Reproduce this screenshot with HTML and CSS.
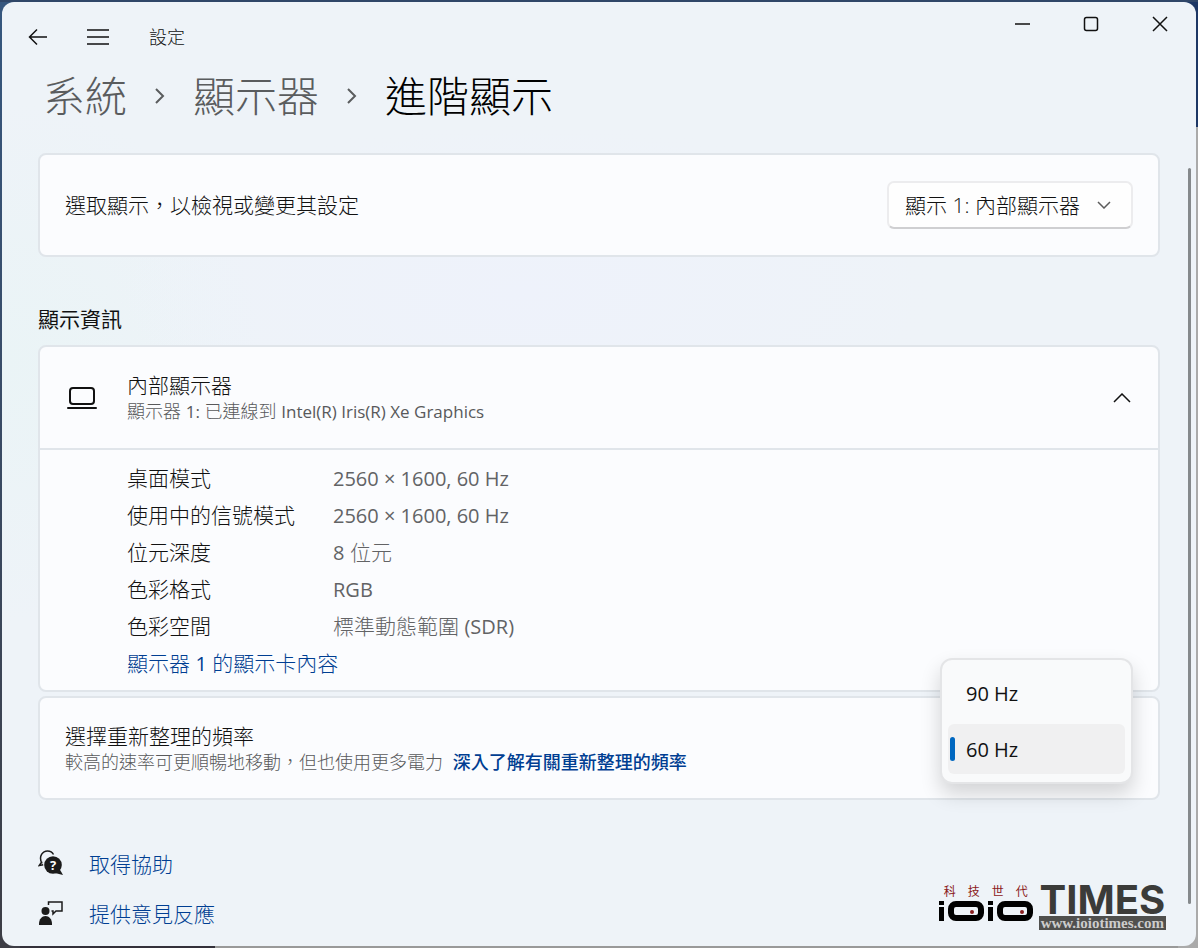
FILE: index.html
```html
<!DOCTYPE html>
<html lang="zh-Hant">
<head>
<meta charset="utf-8">
<title>設定</title>
<link rel="stylesheet" href="styles.css">
</head>
<body>
<div class="window">
  <header class="titlebar">
    <div class="nav">
      <button class="icon-btn" aria-label="返回"><svg width="20" height="18" viewBox="0 0 20 18"><path d="M19 9H2M9 1.500 1.500 9 9 16.500"/></svg></button>
      <button class="icon-btn" aria-label="功能表"><svg width="22" height="18" viewBox="0 0 22 18"><path d="M0 2h22M0 9h22M0 16h22"/></svg></button>
      <span class="app-name">設定</span>
    </div>
    <div class="controls">
      <button class="ctl" aria-label="最小化"><svg width="16" height="16" viewBox="0 0 16 16"><path d="M1 8h15"/></svg></button>
      <button class="ctl" aria-label="最大化"><svg width="16" height="16" viewBox="0 0 16 16"><rect x="1.500" y="1.500" width="13" height="13" rx="2"/></svg></button>
      <button class="ctl" aria-label="關閉"><svg width="16" height="16" viewBox="0 0 16 16"><path d="m1 1 14 14M15 1 1 15"/></svg></button>
    </div>
  </header>

  <main class="content">
    <nav class="crumbs" aria-label="路徑">
      <a href="#">系統</a>
      <svg width="10" height="18" viewBox="0 0 10 18"><path d="m1 2 7 7-7 7"/></svg>
      <a href="#">顯示器</a>
      <svg width="10" height="18" viewBox="0 0 10 18"><path d="m1 2 7 7-7 7"/></svg>
      <h1>進階顯示</h1>
    </nav>

    <section class="card row">
      <label class="title" for="display">選取顯示，以檢視或變更其設定</label>
      <div class="select-wrap">
        <select id="display"><option>顯示 1: 內部顯示器</option></select>
        <svg class="chevron" width="14" height="8" viewBox="0 0 14 8"><path d="m1 1 6 6 6-6"/></svg>
      </div>
    </section>

    <h2>顯示資訊</h2>

    <section class="card">
      <button class="expander" aria-expanded="true">
        <svg class="laptop" width="30" height="22" viewBox="0 0 30 22"><rect x="3" y="1" width="24" height="16" rx="3"/><path d="M1 21h28" stroke-linecap="round"/></svg>
        <span class="stack">
          <span class="title">內部顯示器</span>
          <span class="sub">顯示器 <span class="latin-sub">1:</span> 已連線到 <span class="latin-sub">Intel(R) Iris(R) Xe Graphics</span></span>
        </span>
        <svg class="collapse" width="18" height="10" viewBox="0 0 18 10"><path d="m1 9 8-8 8 8"/></svg>
      </button>
      <div class="details">
        <dl>
          <dt>桌面模式</dt><dd><span class="latin">2560 × 1600, 60 Hz</span></dd>
          <dt>使用中的信號模式</dt><dd><span class="latin">2560 × 1600, 60 Hz</span></dd>
          <dt>位元深度</dt><dd><span class="latin">8</span> 位元</dd>
          <dt>色彩格式</dt><dd><span class="latin">RGB</span></dd>
          <dt>色彩空間</dt><dd>標準動態範圍 <span class="latin">(SDR)</span></dd>
        </dl>
        <a class="link" href="#">顯示器 <span class="latin">1</span> 的顯示卡內容</a>
      </div>
    </section>

    <section class="card row rate">
      <div class="stack">
        <span class="title" id="rate-label">選擇重新整理的頻率</span>
        <span class="sub">較高的速率可更順暢地移動，但也使用更多電力 <a class="more" href="#">深入了解有關重新整理的頻率</a></span>
      </div>
      <div class="menu" role="listbox" aria-labelledby="rate-label">
        <button class="option" role="option" aria-selected="false">90 Hz</button>
        <button class="option selected" role="option" aria-selected="true">60 Hz</button>
      </div>
    </section>

    <footer class="help">
      <a class="help-link" href="#">
        <svg width="26" height="26" viewBox="0 0 26 26"><path class="thin" d="M4 13.500C0 6 5 1 9.500 1c3 0 5 1.500 6 3.500M4 11.500 1.200 15.500l4-.8"/><circle class="solid" cx="15" cy="15" r="8.800"/><path class="solid" d="m21 18 4 7-8-2z"/><text class="mark" x="15" y="20">?</text></svg>
        取得協助</a>
      <a class="help-link" href="#">
        <svg width="26" height="26" viewBox="0 0 26 26"><circle class="solid" cx="7.500" cy="11" r="4"/><path class="solid" d="M1 25v-1c0-5 3-8 6.500-8s6.500 3 6.500 8v1z"/><path class="thin" d="M10.500 5V2H24v9h-6l-3 3v-3h-1.500"/></svg>
        提供意見反應</a>
    </footer>
  </main>

  <div class="scroll-thumb"></div>
  <div class="watermark">
    <div class="brand">
      <div class="brand-cn"><span>科</span><span>技</span><span>世</span><span>代</span></div>
      <svg class="ioio" width="96" height="22" viewBox="0 0 96 22">
        <path class="ink" d="M1 1h5v4H1zM1 7h5v14H1zM50 1h5v4h-5zM50 7h5v14h-5z"/>
        <rect class="ring" x="13" y="4" width="30" height="14" rx="5"/>
        <rect class="ring" x="62" y="4" width="30" height="14" rx="5"/>
        <circle class="dot" cx="34" cy="12" r="2"/><circle class="dot" cx="84" cy="12" r="2"/>
      </svg>
    </div>
    <div class="times"><span class="times-name">TIMES</span><span class="times-url">www.ioiotimes.com</span></div>
  </div>
</div>
</body>
</html>
```
FILE: styles.css
```css
* { box-sizing: border-box; }

body {
  margin: 0;
  padding: 2px;
  min-height: 100vh;
  font-family: "Open Sans", "Noto Sans CJK TC", sans-serif;
  font-size: 21px;
  font-weight: 300;
  color: #111;
  background:
    linear-gradient(#2f4668, #2f4668) top / 100% 2px no-repeat,
    linear-gradient(#1d3765 127px, #aaa 127px) right / 20px 100% no-repeat,
    linear-gradient(#36577f, #3d3d45) left / 20px 100% no-repeat,
    linear-gradient(90deg, #33303a 215px, #999 215px);
}

button, select {
  font: inherit;
  color: inherit;
  border: 0;
  background: none;
  padding: 0;
}

a { text-decoration: none; }
svg { fill: none; stroke: currentColor; stroke-width: 2; flex: none; }

.latin { font-size: 20px; font-weight: 400; }
.latin-sub { font-size: 17px; font-weight: 400; }

.window {
  position: relative;
  min-height: calc(100vh - 4px);
  border-radius: 12px;
  background:
    radial-gradient(ellipse 420px 170px at 520px 290px, #eef2fb, transparent),
    radial-gradient(circle at 0 360px, #eaf4f6, transparent 260px),
    #eef3f8;
}

.titlebar { display: flex; justify-content: space-between; height: 70px; }
.nav { display: flex; align-items: center; padding-left: 6px; }
.icon-btn { width: 60px; height: 50px; display: grid; place-items: center; }
.icon-btn svg { stroke-width: 1.5; }
.app-name { font-size: 18px; line-height: 24px; padding-left: 21px; }
.controls { display: flex; padding-right: 2px; }
.ctl { width: 69px; height: 44px; display: grid; place-items: center; }
.ctl svg { stroke-width: 1.5; }

.content { padding: 0 36px; }

.crumbs {
  display: flex;
  align-items: center;
  gap: 28px;
  padding-left: 5px;
  margin-bottom: 33px;
  font-size: 42px;
  line-height: 48px;
  color: #5a5c5e;
}
.crumbs a { color: inherit; }
.crumbs h1 { margin: 0; font-size: 42px; font-weight: 300; color: #000; }

.card {
  border: 2px solid #e0e5ea;
  border-radius: 8px;
  background: #fbfcfe;
  margin-bottom: 4px;
}
.row {
  display: flex;
  align-items: center;
  justify-content: space-between;
  min-height: 104px;
  padding: 0 25px;
}
.stack { display: flex; flex-direction: column; text-align: left; }
.title { line-height: 28px; }
.sub { font-size: 18px; line-height: 24px; color: #58595b; }

.select-wrap { position: relative; }
.select-wrap select {
  appearance: none;
  width: 246px;
  height: 48px;
  padding: 0 16px;
  border: 2px solid #ececee;
  border-bottom-color: #cfcfd1;
  border-radius: 7px;
  background: #fefefe;
}
.chevron { position: absolute; right: 22px; top: 20px; color: #5c5c5c; stroke-width: 1.5; }

h2 { margin: 48px 0 12px; font-size: 21px; line-height: 28px; font-weight: 400; }

.expander {
  display: flex;
  align-items: center;
  width: 100%;
  height: 103px;
  padding: 0 27px;
  border-bottom: 2px solid #e0e5ea;
}
.expander .stack { flex: 1; padding-left: 30px; }
.collapse { stroke-width: 1.5; }
.details { padding: 10px 24px 8px 87px; line-height: 37px; }
dl { display: grid; grid-template-columns: 206px 1fr; grid-auto-rows: 37px; margin: 0; }
dd { margin: 0; color: #626365; }
.link { display: block; height: 37px; }
.link, .help-link { color: #003e92; }
.more { color: #003e92; font-weight: 500; padding-left: 5px; }

.rate { position: relative; }
.menu {
  position: absolute;
  right: 25px;
  top: -40px;
  width: 193px;
  padding: 8px 6px;
  border: 2px solid #e4e5e7;
  border-radius: 12px;
  background: #f9fafb;
  box-shadow: 0 10px 20px rgba(0, 0, 0, .16);
  display: grid;
  gap: 6px;
}
.option {
  position: relative;
  height: 50px;
  padding-left: 18px;
  border-radius: 6px;
  text-align: left;
  font-size: 20px;
  font-weight: 400;
}
.selected { background: #f0f0f1; }
.selected::before {
  content: "";
  position: absolute;
  left: 2px;
  top: 13px;
  width: 5px;
  height: 24px;
  border-radius: 3px;
  background: #0067c0;
}

.help { padding-top: 34px; }
.help-link { display: flex; align-items: center; gap: 25px; height: 50px; }
.help-link svg { color: #1b1b1b; }
.thin { stroke-width: 1.5; }
.solid { fill: currentColor; stroke: none; }
.mark { fill: #fff; stroke: none; font-size: 13px; font-weight: 700; text-anchor: middle; }

.scroll-thumb {
  position: absolute;
  right: 5px;
  top: 166px;
  bottom: 42px;
  width: 3px;
  border-radius: 2px;
  background: #85898c;
}

.watermark { position: absolute; right: 30px; bottom: 16px; display: flex; gap: 5px; }
.brand-cn { display: flex; justify-content: space-around; font-size: 12px; line-height: 16px; font-weight: 400; color: #8b2020; }
.brand { display: flex; flex-direction: column; }
.ioio { stroke: none; }
.ink { fill: #000; }
.ring { stroke: #000; stroke-width: 6; }
.dot { fill: #8b2020; }
.times { display: flex; flex-direction: column; align-items: center; color: #3b3b39; }
.times-name { font: 700 40px/32px Inter, sans-serif; }
.times-url {
  padding: 0 2px;
  background: #50504e;
  color: #ccc;
  font: 700 15px/14px "Liberation Serif", serif;
}
```
